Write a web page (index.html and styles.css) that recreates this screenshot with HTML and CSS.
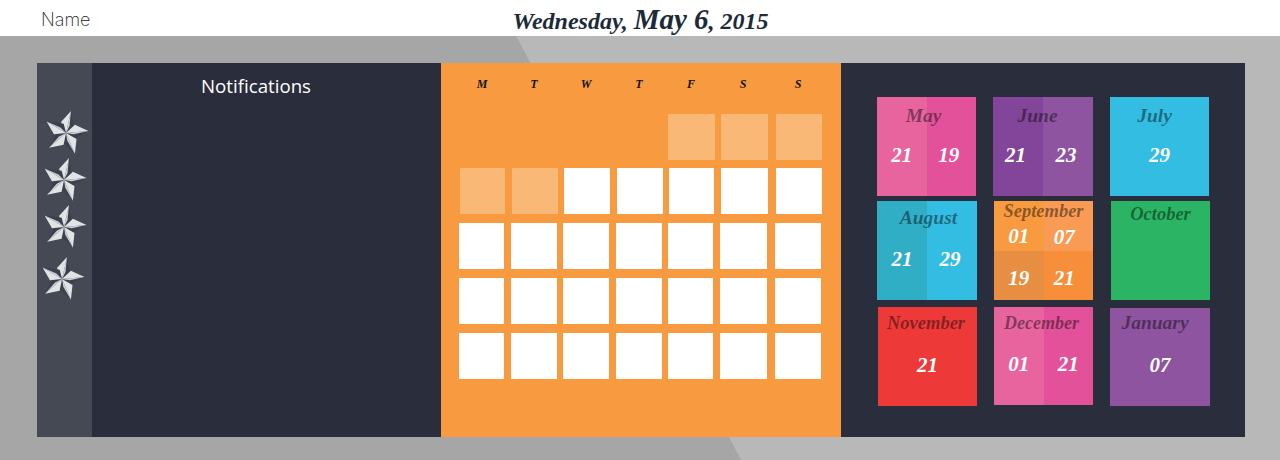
FILE: index.html
```html
<!DOCTYPE html>
<html lang="en">
<head>
    <meta charset="UTF-8">
    <title>Calendar</title>
    <link rel="stylesheet" href="styles.css">
</head>
<body>
    <svg class="defs" width="0" height="0">
        <symbol id="pinwheel" viewBox="-24 -24 48 48">
            <g id="blade">
                <path class="shade" d="M0 0 L5 -22 L8 -5 Z"/>
                <path class="mid" d="M0 0 L5 -22 L3.5 -7 Z"/>
                <path class="light" d="M0 0 L-5 -11 L5 -22 Z"/>
            </g>
            <use href="#blade" transform="rotate(72)"/>
            <use href="#blade" transform="rotate(144)"/>
            <use href="#blade" transform="rotate(216)"/>
            <use href="#blade" transform="rotate(288)"/>
        </symbol>
    </svg>

    <header class="topbar">
        <span class="name">Name</span>
        <h1 class="date">Wednesday, <span class="date-big">May 6</span>, 2015</h1>
    </header>

    <main class="stage">
        <div class="board">
            <nav class="rail">
                <svg class="wheel"><use href="#pinwheel"/></svg>
                <svg class="wheel wheel-2"><use href="#pinwheel"/></svg>
                <svg class="wheel wheel-3"><use href="#pinwheel"/></svg>
                <svg class="wheel wheel-4"><use href="#pinwheel"/></svg>
            </nav>

            <section class="notifications">
                <h2>Notifications</h2>
            </section>

            <section class="calendar">
                <div class="week weekdays">
                    <span>M</span><span>T</span><span>W</span><span>T</span><span>F</span><span>S</span><span>S</span>
                </div>
                <div class="week week-first">
                    <div></div><div></div><div></div><div></div>
                    <div class="day faded"></div><div class="day faded"></div><div class="day faded"></div>
                </div>
                <div class="week week-second">
                    <div class="day faded"></div><div class="day faded"></div><div class="day"></div><div class="day"></div><div class="day"></div><div class="day"></div><div class="day"></div>
                </div>
                <div class="week">
                    <div class="day"></div><div class="day"></div><div class="day"></div><div class="day"></div><div class="day"></div><div class="day"></div><div class="day"></div>
                </div>
                <div class="week">
                    <div class="day"></div><div class="day"></div><div class="day"></div><div class="day"></div><div class="day"></div><div class="day"></div><div class="day"></div>
                </div>
                <div class="week">
                    <div class="day"></div><div class="day"></div><div class="day"></div><div class="day"></div><div class="day"></div><div class="day"></div><div class="day"></div>
                </div>
            </section>

            <section class="months">
                <div class="tile two may">
                    <h3>May</h3>
                    <div class="cell pink-l">21</div>
                    <div class="cell pink-r">19</div>
                </div>
                <div class="tile two june">
                    <h3>June</h3>
                    <div class="cell purple-l">21</div>
                    <div class="cell purple-r">23</div>
                </div>
                <div class="tile one july">
                    <h3>July</h3>
                    <div class="cell blue">29</div>
                </div>
                <div class="tile two august">
                    <h3>August</h3>
                    <div class="cell blue-l">21</div>
                    <div class="cell blue">29</div>
                </div>
                <div class="tile four september">
                    <h3>September</h3>
                    <div class="cell or-a">01</div>
                    <div class="cell or-b">07</div>
                    <div class="cell or-c">19</div>
                    <div class="cell or-d">21</div>
                </div>
                <div class="tile one october">
                    <h3>October</h3>
                    <div class="cell green"></div>
                </div>
                <div class="tile one november">
                    <h3>November</h3>
                    <div class="cell red">21</div>
                </div>
                <div class="tile two december">
                    <h3>December</h3>
                    <div class="cell pink-l">01</div>
                    <div class="cell pink-r">21</div>
                </div>
                <div class="tile one january">
                    <h3>January</h3>
                    <div class="cell purple-r">07</div>
                </div>
            </section>
        </div>
    </main>
</body>
</html>
```

FILE: styles.css
```css
html, body {
    margin: 0;
    height: 460px;
    overflow: hidden;
}

body {
    font-family: "Open Sans", sans-serif;
    background-color: #a6a6a6;
}

.defs {
    display: block;
    height: 0;
}

.topbar {
    height: 36px;
    background: white;
    display: flex;
    justify-content: center;
    align-items: center;
    position: relative;
}

.name {
    position: absolute;
    left: 41px;
    top: 9px;
    font-family: Inter, sans-serif;
    font-weight: 200;
    font-size: 18px;
    color: #222;
}

.date {
    margin: 2px 0 0 1px;
    font-family: "Liberation Serif", serif;
    font-style: italic;
    font-weight: bold;
    font-size: 24px;
    color: #1c2b3a;
}

.date-big {
    font-size: 29px;
}

.stage {
    height: 424px;
    box-sizing: border-box;
    padding: 27px 35px 0 37px;
    background: linear-gradient(62.05deg, #a6a6a6 654.4px, #b8b8b8 655px);
}

.board {
    display: flex;
    height: 374px;
    background: #2a2d3b;
}

/* left strip with the pinwheels */
.rail {
    width: 55px;
    background: #454954;
    display: flex;
    flex-direction: column;
    padding: 46px 0 0 5px;
    box-sizing: border-box;
}

.wheel {
    width: 48px;
    height: 48px;
    display: block;
}

.wheel-2 { margin: -1px 0 0 -2px; }
.wheel-3 { margin: -1px 0 0 -2px; }
.wheel-4 { margin: 4px 0 0 -4px; }

.shade { fill: #3a404c; }
.mid { fill: #cdd0d4; }
.light { fill: #e1e3e5; }

.notifications {
    width: 349px;
    padding-right: 21px;
    box-sizing: border-box;
}

.notifications h2 {
    margin: 8px 0 0;
    text-align: center;
    font-weight: normal;
    font-size: 18.7px;
    line-height: 30px;
    color: white;
}

/* calendar */
.calendar {
    width: 400px;
    background: #f89a40;
    padding-left: 18px;
    box-sizing: border-box;
}

.week {
    display: grid;
    grid-template-columns: 52px 52px 53px 52px 52px 55px 46px;
    height: 46px;
    margin-bottom: 9px;
}

.weekdays {
    height: 16px;
    margin: 13px 0 22px;
    font-family: "Liberation Serif", serif;
    font-style: italic;
    font-weight: bold;
    font-size: 12px;
    line-height: 16px;
    color: #111;
}

.weekdays span {
    width: 46px;
    text-align: center;
}

.day {
    width: 46px;
    background: white;
}

.day:nth-child(1), .day:nth-child(5) { width: 45px; }
.day:nth-child(6) { width: 47px; }

.faded { background: #fab877; }

.week-first { margin: 0 0 8px 1px; }
.week-first .day:nth-child(5) { width: 47px; margin-left: -1px; }

.week-second { margin-left: 1px; }

/* month tiles */
.months {
    width: 404px;
    box-sizing: border-box;
    padding: 34px 0 0 36px;
    display: grid;
    grid-template-columns: 116px 117px 100px;
    grid-template-rows: 104px 106px 99px;
    align-content: start;
}

.tile {
    position: relative;
    width: 99px;
    height: 99px;
    display: grid;
    grid-template-columns: 1fr;
    font-family: "Liberation Serif", serif;
    font-style: italic;
    font-weight: bold;
    overflow: hidden;
}

.tile.two { grid-template-columns: 1fr 1fr; }
.tile.four { grid-template-columns: 1fr 1fr; grid-template-rows: 50px 49px; }

.tile h3 {
    position: absolute;
    left: 0;
    right: 0;
    top: 6px;
    margin: 0;
    text-align: center;
    font-size: 19.5px;
    line-height: 26px;
    color: rgba(0, 0, 0, 0.45);
}

.cell {
    display: flex;
    justify-content: center;
    align-items: center;
    padding-top: 17px;
    font-size: 21px;
    color: white;
}

.pink-l { background: #e8649f; }
.pink-r { background: #e2519a; }
.purple-l { background: #83459a; }
.purple-r { background: #8e54a0; }
.blue-l { background: #30aec6; }
.blue { background: #34bde3; }
.or-a { background: #f89a40; }
.or-b { background: #f99b55; }
.or-c { background: #e88e42; }
.or-d { background: #f68e3a; }
.green { background: #2ab463; }
.red { background: #ee3939; }

.may h3 { padding-right: 6px; }
.may .pink-r { padding-right: 5px; }

.june { width: 100px; }
.june h3 { padding-right: 11px; }
.june .purple-l { padding-right: 5px; }
.june .purple-r { padding-right: 4px; }

.july h3 { padding-right: 10px; }

.august { width: 100px; }
.august h3 { top: 4px; padding-left: 3px; }
.august .blue { padding-right: 4px; }

.september { margin-left: 1px; }
.september h3 { top: -2px; font-size: 18.5px; line-height: 24px; }
.september .cell { padding-top: 20px; }
.september .or-b { padding: 22px 8px 0 0; }
.september .or-c, .september .or-d { padding-top: 5px; }
.september .or-d { padding-right: 8px; }

.october { margin-left: 1px; }
.october h3 { top: 0; font-size: 18.5px; }

.november { margin-left: 1px; }
.november h3 { top: 3px; font-size: 18.5px; padding-right: 3px; }

.december { margin-left: 1px; height: 98px; }
.december h3 { top: 3px; font-size: 18px; padding-right: 4px; }

.january { width: 100px; margin-top: 1px; height: 98px; }
.january h3 { top: 2px; padding-right: 10px; }
```
